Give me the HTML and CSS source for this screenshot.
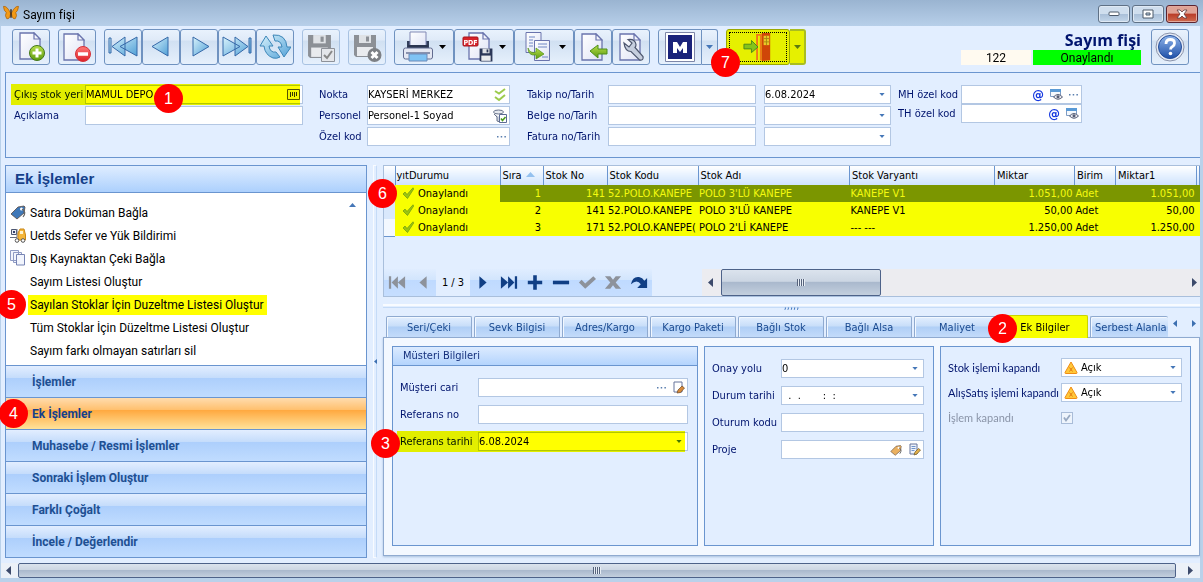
FILE: index.html
```html
<!DOCTYPE html>
<html lang="tr">
<head>
<meta charset="utf-8">
<title>Sayım fişi</title>
<link rel="stylesheet" href="styles.css">
</head>
<body>
<svg class="defs" aria-hidden="true">
  <defs>
    <linearGradient id="gBlue" x1="0" y1="0" x2="1" y2="1"><stop offset="0" stop-color="#d9f3fc"/><stop offset="1" stop-color="#4f9fd6"/></linearGradient>
    <linearGradient id="gPage" x1="0" y1="0" x2="1" y2="1"><stop offset="0" stop-color="#fff"/><stop offset="1" stop-color="#dfe3f5"/></linearGradient>
    <linearGradient id="gGreen" x1="0" y1="0" x2="0" y2="1"><stop offset="0" stop-color="#b8e04a"/><stop offset="1" stop-color="#5c9a10"/></linearGradient>
    <linearGradient id="gRed" x1="0" y1="0" x2="0" y2="1"><stop offset="0" stop-color="#ff7a78"/><stop offset="1" stop-color="#dd1f26"/></linearGradient>
    <linearGradient id="gHelp" x1="0" y1="0" x2="0" y2="1"><stop offset="0" stop-color="#8fb4ea"/><stop offset="1" stop-color="#1f50a8"/></linearGradient>
    <symbol id="page" viewBox="0 0 22 28"><path d="M1 1h14l6 6v20H1z" fill="url(#gPage)" stroke="#6a74ad" stroke-width="1.3"/><path d="M15 1v6h6z" fill="#f4f6fd" stroke="#6a74ad" stroke-width="1.2"/></symbol>
    <symbol id="floppy" viewBox="0 0 24 24"><path d="M1 1h22v22H3l-2-2z" fill="currentColor"/><path d="M6 1h12v8H6z" fill="#dfe2e6"/><path d="M13 2.500h3v5h-3z" fill="currentColor"/><path d="M4 13h16v9H4z" fill="#e9ebee"/></symbol>
    <symbol id="drop" viewBox="0 0 7 4"><path d="M0 0h7L3.500 4z" fill="currentColor"/></symbol>
    <symbol id="dots" viewBox="0 0 9 2"><path d="M0 0h1.500v1.500H0zM3.700 0h1.500v1.500H3.700zM7.400 0h1.500v1.500H7.400z" fill="#5a7fae"/></symbol>
    <symbol id="tick" viewBox="0 0 12 12"><path d="M1 7l2-2 2 2.500L11 .8l.8 1L5.500 11.500z" fill="#9cc512" stroke="#6d9a10" stroke-width=".7"/></symbol>
    <symbol id="eye" viewBox="0 0 13 11"><path d="M.5.5h10v7h-10z" fill="#f5f9fd" stroke="#7f9cc4"/><path d="M0 0h11v3H0z" fill="#5a9ad6"/><path d="M3.500 8q4.500-5 9 0-4.500 4.500-9 0z" fill="#e8e8ee" stroke="#545c74"/><circle cx="8" cy="7.800" r="1.500" fill="#545c74"/></symbol>
    <symbol id="warn" viewBox="0 0 14 13"><path d="M7 1l6 10.500q.3 1-.8 1H1.800q-1.100 0-.8-1z" fill="#ffc83a" stroke="#f08c14" stroke-linejoin="round"/><path d="M5.500 6.500l3 4M8.500 6.500l-3 4" stroke="#e57a10"/></symbol>
    <symbol id="tag" viewBox="0 0 16 16"><path d="M1 10l7-7 6-1 1 1-1 6-7 6z" fill="currentColor" stroke="#5a4a40" stroke-width=".8"/><circle cx="11.500" cy="5" r="1.500" fill="#fff"/><path d="M12 5q5 3 1 8" fill="none" stroke="#666" stroke-width="1.200"/></symbol>
  </defs>
</svg>

<header class="titlebar">
  <svg class="logo" viewBox="0 0 17 16"><path d="M8 8Q4 0 .5 1q.5 5 3 6.500Q1.500 11 4 14q3 1 4-5zM9 8q4-8 7.500-7-.5 5-3 6.500 2 3.500-.5 6.500-3 1-4-5z" fill="#f39a16" stroke="#a8620f" stroke-width=".8"/><path d="M8.500 4v9" stroke="#3a2410" stroke-width="1.500"/></svg>
  <h1>Sayım fişi</h1>
  <div class="winbtns">
    <button aria-label="Simge durumuna küçült"><svg width="12" height="6"><rect x="1" y="1" width="10" height="3.500" rx="1" fill="#fff" stroke="#4d5a6b"/></svg></button>
    <button aria-label="Ekranı kapla"><svg width="12" height="10"><path d="M1 1h10v8H1zM4 4v2h4V4z" fill="#fff" stroke="#4d5a6b" fill-rule="evenodd"/></svg></button>
    <button class="close" aria-label="Kapat"><svg width="12" height="10"><path d="M1 1h3l2 2 2-2h3L8 5l3 4H8L6 7 4 9H1l3-4z" fill="#fff" stroke="#5d3a3f" stroke-width=".8"/></svg></button>
  </div>
</header>

<div class="frame">
  <div class="toolbar">
    <div class="set"><button class="tb" aria-label="Yeni"><svg viewBox="0 0 32 32"><use href="#page" x="4" y="1" width="22" height="28"/><circle cx="22" cy="22" r="7.500" fill="url(#gGreen)" stroke="#44771a"/><path d="M22 17.500v9M17.500 22h9" stroke="#fff" stroke-width="3"/></svg></button></div>
    <div class="set"><button class="tb" aria-label="Sil"><svg viewBox="0 0 32 32"><use href="#page" x="2" y="2" width="22" height="28"/><circle cx="22" cy="23" r="7.500" fill="url(#gRed)" stroke="#d5323a"/><path d="M17 23h10" stroke="#fff" stroke-width="3.500"/></svg></button></div>
    <div class="set">
      <button class="tb" aria-label="İlk"><svg viewBox="0 0 32 32"><path d="M2 7h2v15H2zM18 6v19L5 15.500zM30 6v19L13 15.500z" fill="url(#gBlue)" stroke="#3568a8"/></svg></button>
      <button class="tb" aria-label="Önceki"><svg viewBox="0 0 32 32"><path d="M23 6v19L7 15.500z" fill="url(#gBlue)" stroke="#3568a8"/></svg></button>
      <button class="tb" aria-label="Sonraki"><svg viewBox="0 0 32 32"><path d="M10 6v19l16-9.500z" fill="url(#gBlue)" stroke="#3568a8"/></svg></button>
      <button class="tb" aria-label="Son"><svg viewBox="0 0 32 32"><path d="M28 7h2v15h-2zM14 6v19l13-9.500zM2 6v19l17-9.500z" fill="url(#gBlue)" stroke="#3568a8"/></svg></button>
      <button class="tb" aria-label="Yenile"><svg viewBox="0 0 32 32"><path d="M7 5L1 15h4q1 9 9 12 4 1 7-1l-4-5q-6 1-7-6h4zM14 4q13-1 14 12h4l-7 10-6-10h4q-1-7-7-6z" fill="url(#gBlue)" stroke="#3c86b8"/></svg></button>
    </div>
    <div class="set"><button class="tb" disabled aria-label="Kaydet ve onayla"><svg class="grey" viewBox="0 0 32 32"><use href="#floppy" x="2" y="3" width="25" height="25"/><path d="M16.500 17.500h13v13h-13z" fill="#e4e6ea" stroke="#8d9199"/><path d="M19 24l3 3 5-7" fill="none" stroke="#888" stroke-width="2"/></svg></button></div>
    <div class="set"><button class="tb" disabled aria-label="Kaydı iptal et"><svg class="grey" viewBox="0 0 32 32"><use href="#floppy" x="2" y="3" width="24" height="24"/><circle cx="23.500" cy="24" r="7" fill="#7d8085"/><path d="M20.500 21l6 6M26.500 21l-6 6" stroke="#fff" stroke-width="3"/></svg></button></div>
    <div class="set">
      <button class="tb wide" aria-label="Yazdır"><svg viewBox="0 0 32 32"><path d="M5 10h22v8H5z" fill="#333f5c"/><path d="M8 1h16v14H8z" fill="url(#gPage)" stroke="#8289b5"/><path d="M6 14h20v3H6z" fill="#2c3650"/><rect x="1.500" y="17" width="29" height="11" rx="2" fill="#e4e7f2" stroke="#626c90"/><path d="M4 21h24v2H4z" fill="#8992ae"/><path d="M7 23h18v7H7z" fill="#7fc3f4" stroke="#6d8ab8"/></svg><svg class="dd"><use href="#drop"/></svg></button>
      <button class="tb wide" aria-label="PDF kaydet"><svg viewBox="0 0 32 32"><use href="#page" x="6" y="1" width="22" height="28"/><rect x="1" y="6" width="15" height="9" rx="1" fill="#d8232a" stroke="#a5151c"/><text x="8.500" y="13.500" class="pdf">PDF</text><g class="navy"><use href="#floppy" x="17" y="17" width="14" height="14"/></g></svg><svg class="dd"><use href="#drop"/></svg></button>
      <button class="tb wide" aria-label="Kopyala"><svg viewBox="0 0 32 32"><path d="M4 1.500h15v20H4z" fill="url(#gPage)" stroke="#6a74ad"/><path d="M12.500 9.500h15v20h-15z" fill="url(#gPage)" stroke="#6a74ad"/><path d="M7 6h6M7 9h4M7 12h4M7 15h4M16 13h9M16 16h9M20 26h6" stroke="#6f86c4"/><path d="M6 17q2 6 8 4v-4l8 6-8 5v-4Q6 25 6 17z" fill="url(#gGreen)" stroke="#4f8f1a" stroke-width=".7"/></svg><svg class="dd"><use href="#drop"/></svg></button>
      <button class="tb" aria-label="Geri aktar"><svg viewBox="0 0 32 32"><use href="#page" x="4" y="2" width="22" height="28"/><path d="M13 20l8-6v4h9v5h-9v4z" fill="url(#gGreen)" stroke="#4f8f1a"/></svg></button>
      <button class="tb" aria-label="Ayarlar"><svg viewBox="0 0 32 32"><use href="#page" x="4" y="2" width="22" height="28"/><path d="M9 12l5 4 3-4-4-3.500q7-1 8 5 0 2-1 3l8 9q1 4-3.500 3.500l-8.500-8.500q-6 0-7-8.500z" fill="#c6cede" stroke="#4d566e" stroke-width="1.200"/></svg></button>
    </div>
    <div class="set split">
      <button class="tb m" aria-label="M"><svg viewBox="0 0 32 32"><path d="M1.500 1.500h29v29h-29z" fill="#fff" stroke="#7d86a8"/><path d="M4 4h24v24H4z" fill="#1a237a"/><path d="M9 22V11h4l3 5 3-5h4v11h-4v-5l-3 4-3-4v5z" fill="#fff"/></svg></button>
      <button class="tb thin" aria-label="M seçenekleri"><svg class="dd"><use href="#drop"/></svg></button>
    </div>
    <div class="set split exit">
      <button class="tb door" aria-label="Çıkış"><span class="focus"><svg viewBox="0 0 32 32"><path d="M14 2h6v28h-2V4h-2v26h-2z" fill="#f07818"/><path d="M20 1h9v29l-9 1z" fill="#cf4608"/><path d="M22 4h6v10h-6z" fill="#ecc829"/><path d="M25 4v10M22 7h6M22 10.500h6" stroke="#a58a10"/><path d="M1 13h8V9l7 7-7 6v-4H1z" fill="#84c41c" stroke="#49871c"/></svg></span></button>
      <button class="tb thin" aria-label="Çıkış seçenekleri"><svg class="dd"><use href="#drop"/></svg></button>
      <span class="badge b7">7</span>
    </div>
    <div class="docinfo"><h2>Sayım fişi</h2><div class="chips"><span class="no">122</span><span class="state">Onaylandı</span></div></div>
    <button class="tb help" aria-label="Yardım"><svg viewBox="0 0 32 32"><circle cx="16" cy="16" r="14" fill="#e6ebf5" stroke="#8a93aa"/><circle cx="16" cy="16" r="11.500" fill="url(#gHelp)" stroke="#244e9a"/><path d="M12 13q0-4.500 4.300-4.500 4.200 0 4.200 3.700 0 2.300-2.300 3.600-1.600.8-1.600 2.700" fill="none" stroke="#fff" stroke-width="2.800"/><circle cx="16.500" cy="22.500" r="1.800" fill="#fff"/></svg></button>
  </div>

  <form class="head">
    <div class="cols c1">
      <div class="row mark"><label for="f1">Çıkış stok yeri</label><div class="field"><input id="f1" value="MAMUL DEPO"><button type="button" aria-label="Seç"><svg class="pick" width="13" height="11" viewBox="0 0 13 11"><path d="M.5.500h12v10H.5z" fill="#f4f7fb" stroke="#555"/><path d="M3.500 3v5M5.500 3v4M7.500 3v5M9.500 3v4" stroke="#333"/></svg></button></div><span class="badge b1">1</span></div>
      <div class="row"><label for="f2">Açıklama</label><div class="field"><input id="f2"></div></div>
    </div>
    <div class="cols c2">
      <div class="row"><label for="f3">Nokta</label><div class="field"><input id="f3" value="KAYSERİ MERKEZ"><button type="button" aria-label="Nokta seç"><svg class="pick" width="12" height="14" viewBox="0 0 12 14"><path d="M1 3l4 2.500L11 1M1 9l4 3 6-5" fill="none" stroke="#9ccb4c" stroke-width="2"/></svg></button></div></div>
      <div class="row"><label for="f4">Personel</label><div class="field"><input id="f4" value="Personel-1 Soyad"><button type="button" aria-label="Personel seç"><svg width="14" height="14" viewBox="0 0 14 14"><ellipse cx="5.500" cy="3" rx="5" ry="2" fill="#e6e9ef" stroke="#68738a"/><path d="M1 5l3 3v4l3 1V8" fill="#cfd5e0" stroke="#68738a"/><path d="M6.500 5.500h7v8h-7z" fill="#fff" stroke="#5c6b94"/><path d="M8 9.500l1.500 2L12.500 8" fill="none" stroke="#4c9c1e" stroke-width="1.600"/></svg></button></div></div>
      <div class="row"><label for="f5">Özel kod</label><div class="field"><input id="f5"><button type="button" aria-label="Özel kod seç"><svg class="pick" width="9" height="2"><use href="#dots"/></svg></button></div></div>
    </div>
    <div class="cols c3">
      <div class="row"><label for="f6">Takip no/Tarih</label><div class="field"><input id="f6"></div><div class="field date"><input aria-label="Takip tarihi" value="6.08.2024"><button type="button" aria-label="Takvim"><svg class="dd"><use href="#drop"/></svg></button></div></div>
      <div class="row"><label for="f7">Belge no/Tarih</label><div class="field"><input id="f7"></div><div class="field date"><input aria-label="Belge tarihi"><button type="button" aria-label="Takvim"><svg class="dd"><use href="#drop"/></svg></button></div></div>
      <div class="row"><label for="f8">Fatura no/Tarih</label><div class="field"><input id="f8"></div><div class="field date"><input aria-label="Fatura tarihi"><button type="button" aria-label="Takvim"><svg class="dd"><use href="#drop"/></svg></button></div></div>
    </div>
    <div class="cols c4">
      <div class="row"><label for="f9">MH özel kod</label><div class="field"><input id="f9"><button type="button" class="at">@</button><button type="button" aria-label="Göster"><svg width="13" height="11"><use href="#eye"/></svg></button><button type="button" aria-label="MH seç"><svg class="pick" width="9" height="2"><use href="#dots"/></svg></button></div></div>
      <div class="row"><label for="f10">TH özel kod</label><div class="field"><input id="f10"><button type="button" class="at">@</button><button type="button" aria-label="Göster"><svg width="13" height="11"><use href="#eye"/></svg></button></div></div>
    </div>
  </form>

  <main>
    <aside>
      <h2>Ek İşlemler</h2>
      <ul class="actions">
        <li><a href="#"><svg viewBox="0 0 16 16" class="blue"><use href="#tag"/></svg>Satıra Doküman Bağla</a></li>
        <li><a href="#"><svg viewBox="0 0 16 16"><path d="M1.500 2.500h5v5h-5z" fill="#e8ecf4" stroke="#4c5670"/><path d="M3 4h2v2H3z" fill="#33406a"/><path d="M0 10.500h7V2" fill="none" stroke="#687080"/><path d="M8 6l2-4h4l1.500 6v5H8z" fill="#f5b63a" stroke="#c98716"/><path d="M10 4h3v3h-3z" fill="#fff3cf"/><circle cx="7" cy="13.500" r="1.800" fill="#fff" stroke="#555"/><circle cx="13" cy="13.500" r="1.800" fill="#fff" stroke="#555"/></svg>Uetds Sefer ve Yük Bildirimi</a></li>
        <li><a href="#"><svg viewBox="0 0 16 16"><path d="M.5.500h8v10h-8zM3.500 2.500h8v10h-8z" fill="#f2f5fd" stroke="#8f9bc4"/><path d="M6.500 4.500h8v10.500h-8z" fill="#f2f5fd" stroke="#7784b4"/></svg>Dış Kaynaktan Çeki Bağla</a></li>
        <li><a href="#">Sayım Listesi Oluştur</a></li>
        <li class="hl"><a href="#">Sayılan Stoklar İçin Duzeltme Listesi Oluştur</a><span class="badge b5">5</span></li>
        <li><a href="#">Tüm Stoklar İçin Düzeltme Listesi Oluştur</a></li>
        <li><a href="#">Sayım farkı olmayan satırları sil</a></li>
      </ul>
      <button class="up" aria-label="Yukarı"><svg width="7" height="4"><path d="M0 4h7L3.500 0z" fill="#4577b8"/></svg></button>
      <nav>
        <button>İşlemler</button>
        <button class="on">Ek İşlemler<span class="badge b4">4</span></button>
        <button>Muhasebe / Resmi İşlemler</button>
        <button>Sonraki İşlem Oluştur</button>
        <button>Farklı Çoğalt</button>
        <button>İncele / Değerlendir</button>
      </nav>
    </aside>
    <div class="vsplit"><svg width="3" height="5"><path d="M3 0v5L0 2.500z" fill="#3c6fb0"/></svg></div>

    <section class="right">
      <div class="grid">
        <table>
          <colgroup><col class="w-ind"><col class="w-st"><col class="w-sira"><col class="w-no"><col class="w-kod"><col><col class="w-var"><col class="w-mik"><col class="w-bir"><col class="w-mik1"><col class="w-end"></colgroup>
          <thead><tr><th></th><th class="cut">yıtDurumu</th><th>Sıra <svg width="9" height="5"><path d="M0 5h9L4.500 0z" fill="#94c1ef"/></svg></th><th>Stok No</th><th>Stok Kodu</th><th>Stok Adı</th><th>Stok Varyantı</th><th>Miktar</th><th>Birim</th><th>Miktar1</th><th></th></tr></thead>
          <tbody>
            <tr class="sel"><td></td><td class="st"><svg><use href="#tick"/></svg>Onaylandı</td><td class="n">1</td><td class="n">141</td><td>52.POLO.KANEPE</td><td>POLO 3'LÜ KANEPE</td><td>KANEPE V1</td><td class="n">1.051,00</td><td>Adet</td><td class="n">1.051,00</td><td></td></tr>
            <tr><td></td><td class="st"><svg><use href="#tick"/></svg>Onaylandı</td><td class="n">2</td><td class="n">141</td><td>52.POLO.KANEPE</td><td>POLO 3'LÜ KANEPE</td><td>KANEPE V1</td><td class="n">50,00</td><td>Adet</td><td class="n">50,00</td><td></td></tr>
            <tr><td></td><td class="st"><svg><use href="#tick"/></svg>Onaylandı</td><td class="n">3</td><td class="n">171</td><td>52.POLO.KANEPE(</td><td>POLO 2'Lİ KANEPE</td><td>--- ---</td><td class="n">1.250,00</td><td>Adet</td><td class="n">1.250,00</td><td></td></tr>
          </tbody>
        </table>
        <span class="badge b6">6</span>
        <div class="pager">
          <div class="pg"><button disabled aria-label="İlk kayıt"><svg viewBox="0 0 20 16"><path d="M1 1h2.500v14H1zM11 1v14L4 8zM19 1v14l-8-7z"/></svg></button><button disabled aria-label="Önceki kayıt"><svg viewBox="0 0 20 16"><path d="M14 1v14L6 8z"/></svg></button></div>
          <span class="count">1 / 3</span>
          <div class="pg"><button aria-label="Sonraki kayıt"><svg viewBox="0 0 20 16"><path d="M6 1v14l8-7z"/></svg></button><button aria-label="Son kayıt"><svg viewBox="0 0 20 16"><path d="M19 1h-2.500v14H19zM9 1v14l7-7zM1 1v14l8-7z"/></svg></button><button aria-label="Ekle"><svg viewBox="0 0 20 16"><path d="M8 0h4v6h6v4h-6v6H8v-6H2V6h6z"/></svg></button><button aria-label="Çıkar"><svg viewBox="0 0 20 16"><path d="M1 6h18v4H1z"/></svg></button><button disabled aria-label="Onayla"><svg viewBox="0 0 20 16"><path d="M1 8l3-3 4 4 9-8 3 3L8 15z"/></svg></button><button disabled aria-label="İptal"><svg viewBox="0 0 20 16"><path d="M1 1h6l3 4 3-4h6l-6 7 6 7h-6l-3-4-3 4H1l6-7z"/></svg></button><button aria-label="Yenile"><svg viewBox="0 0 20 16"><path d="M1 10Q3 1 10 2q4 .5 6 4l3-3v11H8l4-4Q8 4 1 10z"/></svg></button></div>
          <div class="hscroll"><svg class="ar" viewBox="0 0 5 9"><path d="M5 0v9L0 4.500z"/></svg><span class="thumb"><i></i></span><svg class="ar" viewBox="0 0 5 9"><path d="M0 0v9l5-4.500z"/></svg></div>
        </div>
      </div>
      <div class="hsplit"><span>,,,,,</span></div>

      <div class="tabs" role="tablist">
        <div class="strip">
          <button role="tab">Seri/Çeki</button><button role="tab">Sevk Bilgisi</button><button role="tab">Adres/Kargo</button><button role="tab">Kargo Paketi</button><button role="tab">Bağlı Stok</button><button role="tab">Bağlı Alsa</button><button role="tab">Maliyet</button><button role="tab" class="on" aria-selected="true">Ek Bilgiler<span class="badge b2">2</span></button><button role="tab" class="last">Serbest Alanla</button>
        </div>
        <div class="arrows"><button aria-label="Sola"><svg width="4" height="7"><path d="M4 0v7L0 3.500z" fill="#3c6fb0"/></svg></button><button aria-label="Sağa"><svg width="4" height="7"><path d="M0 0v7l4-3.500z" fill="#3c6fb0"/></svg></button></div>
      </div>
      <form class="panel">
        <fieldset class="g1"><h3>Müsteri Bilgileri</h3><div class="rows">
          <div class="row"><label for="p1">Müşteri cari</label><div class="field"><input id="p1"><button type="button" aria-label="Cari seç"><svg width="9" height="2"><use href="#dots"/></svg></button><button type="button" aria-label="Düzenle"><svg width="12" height="13" viewBox="0 0 12 13"><path d="M1 1h8v10H1z" fill="#fff" stroke="#66759c"/><path d="M4 12l1-3 4-4 2.500 2-4 4.500z" fill="#d88a3a" stroke="#6d4a2a" stroke-width=".7"/></svg></button></div></div>
          <div class="row"><label for="p2">Referans no</label><div class="field"><input id="p2"></div></div>
          <div class="row mark"><label for="p3">Referans tarihi</label><div class="field"><input id="p3" value="6.08.2024"><button type="button" aria-label="Takvim"><svg class="dd"><use href="#drop"/></svg></button></div><span class="badge b3">3</span></div>
        </div></fieldset>
        <fieldset class="g2"><div class="rows">
          <div class="row"><label for="p4">Onay yolu</label><div class="field"><select id="p4"><option>0</option></select><svg class="dd"><use href="#drop"/></svg></div></div>
          <div class="row"><label for="p5">Durum tarihi</label><div class="field"><input id="p5" value="&nbsp; .&nbsp; .&nbsp;&nbsp;&nbsp;&nbsp;&nbsp;&nbsp; :&nbsp; :"><button type="button" aria-label="Takvim"><svg class="dd"><use href="#drop"/></svg></button></div></div>
          <div class="row"><label for="p6">Oturum kodu</label><div class="field"><input id="p6"></div></div>
          <div class="row"><label for="p7">Proje</label><div class="field"><input id="p7"><button type="button" class="orange" aria-label="Proje seç"><svg width="12" height="12"><use href="#tag"/></svg></button><button type="button" aria-label="Proje düzenle"><svg width="12" height="13" viewBox="0 0 12 13"><path d="M1 1h7v10H1z" fill="#eef3fb" stroke="#66759c"/><path d="M2.500 3.500h4M2.500 5.500h4M2.500 7.500h3" stroke="#6f93cc"/><path d="M5 12l1-3 3.500-3.500L11.500 7 8 11z" fill="#e3b04a" stroke="#6d5a2a" stroke-width=".7"/></svg></button></div></div>
        </div></fieldset>
        <fieldset class="g3"><div class="rows">
          <div class="row"><label for="p8">Stok işlemi kapandı</label><div class="field"><svg width="14" height="13"><use href="#warn"/></svg><select id="p8"><option>Açık</option></select><svg class="dd"><use href="#drop"/></svg></div></div>
          <div class="row"><label for="p9">AlışSatış işlemi kapandı</label><div class="field"><svg width="14" height="13"><use href="#warn"/></svg><select id="p9"><option>Açık</option></select><svg class="dd"><use href="#drop"/></svg></div></div>
          <div class="row off"><label for="p10">İşlem kapandı</label><input type="checkbox" id="p10" checked disabled></div>
        </div></fieldset>
      </form>
    </section>
  </main>

  <div class="bottom"><svg class="ar" viewBox="0 0 5 9"><path d="M5 0v9L0 4.500z"/></svg><span class="thumb"><i></i></span><svg class="ar end" viewBox="0 0 5 9"><path d="M0 0v9l5-4.500z"/></svg></div>
</div>
</body>
</html>
```
FILE: styles.css
```css
* { box-sizing: border-box; }
body {
  margin: 0;
  min-height: 100vh;
  display: flex;
  flex-direction: column;
  background: #b9d1ea;
  color: #000;
  font: 11px/14px "DejaVu Sans Condensed", Tahoma, sans-serif;
}
button, input, select { font: inherit; color: inherit; }
button { border: 0; background: none; padding: 0; }
h1, h2, h3, ul, fieldset { margin: 0; padding: 0; border: 0; list-style: none; min-width: 0; }
svg { display: block; flex: none; }
.defs { position: absolute; width: 0; height: 0; }

.badge {
  position: absolute;
  z-index: 5;
  width: 29px;
  height: 29px;
  border-radius: 50%;
  background: #f00;
  color: #fff;
  font: 16px/29px "Liberation Sans", Arial, sans-serif;
  text-align: center;
}
.b1 { left: 140px; top: -1px; }
.b2 { left: -15px; top: -2px; }
.b3 { left: -29px; top: -3px; }
.b4 { left: -7px; top: 1px; }
.b5 { left: -31px; top: -3px; }
.b6 { left: -16px; top: 13px; }
.b7 { left: -15px; top: 19px; }

/* title bar */
.titlebar {
  display: flex;
  align-items: center;
  height: 26px;
  padding: 0 5px 0 3px;
  background: linear-gradient(#9ab4d1, #b7cfe9);
}
.logo { width: 16px; height: 16px; }
.titlebar h1 { flex: 1; padding: 3px 0 0 4px; font: 12px/16px Roboto, "Segoe UI", sans-serif; }
.winbtns { display: flex; gap: 2px; padding-top: 2px; }
.winbtns button {
  width: 32px;
  height: 18px;
  display: grid;
  place-items: center;
  border: 1px solid #5f7186;
  border-radius: 3px;
  background: linear-gradient(#cfdeee 50%, #a9bfd8 50%, #c3d6ea);
  box-shadow: inset 0 0 0 1px #dfe9f4;
}
.winbtns .close { border-color: #5b2430; background: linear-gradient(#dfa396 45%, #b93c28 50%, #cf6b4f); box-shadow: inset 0 0 0 1px #e3a99d; }

.frame {
  flex: 1;
  display: flex;
  flex-direction: column;
  margin: 0 3px 4px 1px;
  background: #e2eeff;
}

/* toolbar */
.toolbar { display: flex; gap: 8px; padding: 3px 11px 7px; height: 46px; }
.set { display: flex; position: relative; }
.tb {
  width: 38px;
  height: 36px;
  display: flex;
  align-items: center;
  justify-content: center;
  gap: 5px;
  border: 1px solid #6f92c0;
  border-radius: 3px;
  background: linear-gradient(#e9f2fd, #dfeaf8 30%, #d0e0f2 32%, #e6f0fc);
}
.tb svg { width: 32px; height: 32px; }
.tb.wide { width: 60px; }
svg.dd { width: 6px; height: 3px; margin-right: 3px; color: #4577b8; }
.tb svg.dd { width: 7px; height: 4px; margin: 0; }
.tb.wide svg.dd { color: #000; }
.tb:disabled { border-color: #a8c2e2; }
.grey { color: #8c9096; }
.navy { color: #2b3758; }
.pdf { font: bold 7px "DejaVu Sans Condensed", sans-serif; fill: #fff; text-anchor: middle; }
.split .m { width: 44px; border-radius: 3px 0 0 3px; }
.split .thin { width: 16px; border-left: 0; border-radius: 0 3px 3px 0; }
.exit .tb { background: #e6f000; border-color: #9aa800; }
.exit .door { width: 64px; }
.exit .thin { border: 2px solid #a9bd20; border-left: 0; }
.exit svg.dd { color: #5c7a10; }
.focus { display: flex; justify-content: center; width: 58px; height: 30px; border: 1px dotted #000; }
.focus svg { margin-top: -1px; height: 30px; }
.docinfo { margin-left: auto; text-align: right; }
.docinfo h2 { height: 21px; color: #00146e; font: bold 16px/22px "Open Sans", sans-serif; }
.chips { display: flex; gap: 2px; text-align: center; line-height: 16px; font-family: Roboto, "Segoe UI", sans-serif; font-size: 12px; }
.chips span { height: 15px; }
.chips .no { width: 70px; background: #fffaf0; }
.chips .state { width: 108px; background: #0f0; }
.help { margin-left: 2px; }

/* fields */
.row { display: flex; align-items: center; position: relative; height: 19px; }
label { color: #00146e; white-space: nowrap; }
.field {
  flex: 1;
  min-width: 0;
  display: flex;
  align-items: center;
  gap: 7px;
  height: 19px;
  padding: 0 2px 0 0;
  border: 1px solid #b3c7e3;
  background: #fff;
}
.field input, .field select { flex: 1; min-width: 0; width: 20px; height: 17px; border: 0; padding: 0; background: none; appearance: none; outline: 0; }
.pick { margin-right: 1px; }
.c1 .pick { margin-right: 0; }
.at { color: #1437e0; font: bold 13px/16px "DejaVu Sans Condensed", sans-serif; }
.mark::after {
  content: "";
  position: absolute;
  inset: -1px 3px -1px -3px;
  background: #ff0;
  mix-blend-mode: multiply;
  pointer-events: none;
}

/* document header */
.head {
  display: flex;
  height: 86px;
  margin-left: 4px;
  padding: 12px 8px;
  border: 1px solid #6a95cf;
  border-right: 0;
}
.cols { display: flex; flex-direction: column; gap: 2px; }
.c1 { width: 289px; margin-right: 16px; }
.c1 label { width: 71px; }
.c2 { width: 191px; margin-right: 17px; }
.c2 label { width: 48px; }
.c3 { width: 364px; margin-right: 7px; }
.c3 label { width: 81px; }
.c3 .date { flex: none; width: 127px; margin-left: 8px; }
.c4 { width: 184px; gap: 0; }
.c4 label { width: 63px; }
.c4 .field { gap: 6px; }

/* main area */
main { flex: 1; display: flex; margin: 7px 0 5px 4px; }
aside { width: 362px; display: flex; flex-direction: column; position: relative; border: 1px solid #6a95cf; background: #fff; }
aside h2 {
  height: 27px;
  padding-left: 9px;
  border-bottom: 1px solid #6a95cf;
  background: linear-gradient(#dfedff, #acd0fd);
  color: #15408a;
  font: bold 15px/26px "Liberation Sans", Arial, sans-serif;
}
.actions { flex: 1; padding: 8px 3px 0; font: 12px/20px Roboto, "Segoe UI", sans-serif; }
.actions li { position: relative; display: flex; align-items: center; height: 23px; padding-left: 21px; }
.actions a { color: #000; text-decoration: none; position: relative; }
.actions a svg { position: absolute; left: -20px; top: 1px; width: 16px; height: 16px; }
.blue { color: #3f78b8; }
.orange { color: #eab060; }
.hl { margin-left: 19px; }
.actions .hl { padding-left: 0; }
.hl a { padding: 0 3px 0 2px; background: #ff0; }
.up { position: absolute; right: 10px; top: 37px; }
aside nav { display: flex; flex-direction: column; }
aside nav button {
  position: relative;
  height: 32px;
  padding: 0 26px;
  border-top: 1px solid #6a95cf;
  background: linear-gradient(#e2eeff, #c4dcfb 39%, #adcffc 40%, #c0dcff);
  color: #1e4f92;
  font: bold 12px/30px Roboto, "Segoe UI", sans-serif;
  text-align: left;
}
aside nav .on { background: linear-gradient(#ffdcae, #ffbf6c 39%, #ffa940 40%, #ffe29a); color: #15408a; }

.vsplit { width: 4px; margin: 0 6px; display: flex; align-items: center; border: 1px solid #f8fbff; border-right: 1px solid #c5dbf7; }

.right { flex: 1; min-width: 0; display: flex; flex-direction: column; }
.grid { position: relative; height: 132px; display: flex; flex-direction: column; border: 1px solid #a9bfdc; border-right: 0; background: #e2eeff; }
table { width: 100%; table-layout: fixed; border-collapse: collapse; }
.w-ind { width: 11px; } .w-st { width: 105px; } .w-sira { width: 43px; } .w-no { width: 64px; }
.w-kod { width: 91px; } .w-var { width: 145px; } .w-mik { width: 80px; } .w-bir { width: 41px; }
.w-mik1 { width: 81px; } .w-end { width: 3px; }
th {
  height: 19px;
  padding: 0 2px;
  border-right: 1px solid #6a95cf;
  background: linear-gradient(#fff, #e6f1ff 50%, #cfe3fd);
  font-weight: normal;
  text-align: left;
  white-space: nowrap;
}
th.cut { padding-left: 1px; }
th svg { display: inline-block; margin: 0 0 2px 1px; }
td { height: 17px; padding: 1px 2px 0 1px; background: #f8ff00; white-space: nowrap; overflow: hidden; line-height: 16px; }
td:first-child { background: #d9e8fc; }
tbody tr:last-child td:first-child { background: #f3f8ff; border-bottom: 1px solid #6a95cf; }
.n { text-align: right; }
.st { padding-left: 7px; }
.st svg { display: inline-block; width: 12px; height: 12px; margin-right: 4px; vertical-align: -2px; }
.sel td:nth-child(n+3) { background: #7b9600; color: #f4fa10; }
td:last-child { padding: 0; }

.pager { display: flex; align-items: stretch; height: 27px; margin-top: auto; }
.pg { display: flex; background: linear-gradient(#e0edff, #d2e5fd 40%, #bfdaff 42%, #c6deff); }
.pg button { width: 26px; display: grid; place-items: center; color: #113f85; }
.pg button:disabled { color: #8d929b; }
.pg svg { width: 18px; height: 15px; fill: currentColor; }
.count { width: 34px; text-align: center; line-height: 27px; }
.hscroll { flex: 1; display: flex; align-items: center; margin-left: 50px; padding: 0 3px 0 6px; background: #ececf0; }
.ar { width: 5px; height: 9px; fill: #3c4a6b; }
.thumb { display: grid; place-items: center; border: 1px solid #4d6289; border-radius: 2px; background: linear-gradient(#dbe3ed, #ccd6e3 45%, #aab9cd 50%, #c3cfde); }
.thumb i { width: 8px; height: 7px; background: repeating-linear-gradient(90deg, #56637c 0 1px, #e8eef5 1px 2px); }
.hscroll .thumb { width: 160px; height: 27px; margin: 0 auto 0 8px; }
.hsplit { height: 4px; margin: 7px 0; display: flex; justify-content: center; border-top: 2px solid #f8fbff; border-bottom: 1px solid #c5dbf7; color: #3f74bb; line-height: 0; }

/* tabs */
.tabs { display: flex; height: 22px; padding-left: 3px; }
.strip { display: flex; flex: 1; gap: 2px; align-items: flex-end; }
.strip button {
  position: relative;
  flex: 0 0 86px;
  height: 21px;
  padding-top: 2px;
  border: 1px solid #8faad0;
  border-bottom: 0;
  border-radius: 2px 2px 0 0;
  background: linear-gradient(#e3efff, #c8def9 45%, #b0cff6 50%, #c3dbfa);
  box-shadow: inset 1px 1px 0 #f2f8ff;
  color: #1a4a90;
}
.strip .on { height: 23px; margin-bottom: -1px; z-index: 2; background: #f8ff00; border-color: #c9d400; box-shadow: none; color: #000; }
.strip .last { flex: 0 0 78px; padding: 2px 0 0 4px; border-right: 0; white-space: nowrap; text-align: left; }
.arrows { display: flex; gap: 15px; padding: 0 4px 6px 0; align-items: center; }
.panel {
  flex: 1;
  display: grid;
  grid-template-columns: 306fr 230fr 251fr;
  gap: 6px;
  margin-bottom: 2px;
  padding: 8px;
  padding-bottom: 9px;
  border: 1px solid #8faad0;
  background: #f3f8ff;
  box-shadow: 0 1px 2px #a9c0de;
}
fieldset { border: 1px solid #6a95cf; background: #e2eeff; }
h3 { height: 19px; padding-left: 10px; border-bottom: 1px solid #6a95cf; background: linear-gradient(#dcebff, #b4d4fd); color: #15307c; font-size: 11px; font-weight: normal; line-height: 18px; }
.rows { display: flex; flex-direction: column; gap: 8px; padding: 12px 9px 0 7px; }
.g1 label { width: 78px; }
.g2 label { width: 69px; }
.g3 label { width: 113px; font-family: Lato, Tahoma, sans-serif; }
.g3 .rows { gap: 6px; padding: 11px 8px 0 7px; }
.g3 .field { gap: 3px; padding-left: 2px; }
.off label { color: #8a94a8; }
.off input {
  appearance: none;
  width: 12px;
  height: 12px;
  margin: 0;
  border: 1px solid #a9bcd8;
  background: #eef4fc url("data:image/svg+xml,%3Csvg xmlns='http://www.w3.org/2000/svg' viewBox='0 0 10 10'%3E%3Cpath d='M2 4.500l2 3L8 2' fill='none' stroke='%2398a9c2' stroke-width='1.800'/%3E%3C/svg%3E");
}

.bottom { display: flex; align-items: center; height: 15px; padding: 0 7px 0 5px; gap: 7px; background: #ecf1f8; }
.bottom .thumb { flex: 1; height: 15px; }
.bottom .end { margin-left: 5px; }
```
